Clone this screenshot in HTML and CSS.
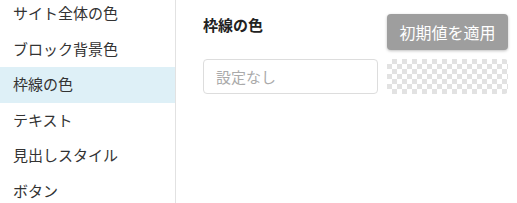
FILE: index.html
```html
<!DOCTYPE html>
<html lang="ja">
<head>
    <meta charset="UTF-8">
    <title>枠線の色</title>
    <link rel="stylesheet" href="styles.css">
</head>
<body>
    <div class="layout">
        <ul class="side-menu">
            <li>サイト全体の色</li>
            <li>ブロック背景色</li>
            <li class="active">枠線の色</li>
            <li>テキスト</li>
            <li>見出しスタイル</li>
            <li>ボタン</li>
        </ul>
        <div class="panel">
            <div class="panel-head">
                <h2>枠線の色</h2>
                <button class="reset-button">初期値を適用</button>
            </div>
            <div class="color-row">
                <input type="text" placeholder="設定なし">
                <div class="color-preview"></div>
            </div>
        </div>
    </div>
</body>
</html>
```

FILE: styles.css
```css
body {
    margin: 0;
    font-family: "Noto Sans CJK JP", "Noto Sans", sans-serif;
    background-color: #fff;
    color: #333;
    overflow: hidden;
}
.layout {
    display: flex;
    height: 203px;
}
.side-menu {
    list-style: none;
    margin: -4px 0 0 0;
    padding: 0;
    width: 175px;
    border-right: 1px solid #e2e2e2;
    flex-shrink: 0;
}
.side-menu li {
    height: 35.5px;
    line-height: 34px;
    padding-left: 13px;
    font-size: 15px;
    color: #333;
}
.side-menu li.active {
    background-color: #def0f7;
}
.panel {
    padding: 14px 0 0 27px;
    width: 305px;
}
.panel-head {
    display: flex;
    justify-content: space-between;
    align-items: flex-start;
}
.panel-head h2 {
    margin: 1px 0 0 0;
    font-size: 15px;
    font-weight: bold;
    color: #222;
    line-height: 20px;
}
.reset-button {
    width: 121px;
    height: 36px;
    padding: 0;
    background-color: #9e9e9e;
    color: #fff;
    border: none;
    border-radius: 4px;
    font-family: inherit;
    font-size: 16px;
    box-shadow: 0 1px 3px rgba(0, 0, 0, 0.25);
}
.color-row {
    display: flex;
    justify-content: space-between;
    margin-top: 9px;
}
.color-row input {
    box-sizing: border-box;
    width: 175px;
    height: 35px;
    padding: 0 12px;
    border: 1px solid #ddd;
    border-radius: 4px;
    font-family: inherit;
    font-size: 15px;
    color: #333;
}
.color-row input::placeholder {
    color: #aaa;
}
.color-preview {
    width: 121px;
    height: 35px;
    border-radius: 4px;
    background-color: #fff;
    background-image:
        linear-gradient(45deg, #e2e2e2 25%, transparent 25%, transparent 75%, #e2e2e2 75%),
        linear-gradient(45deg, #e2e2e2 25%, transparent 25%, transparent 75%, #e2e2e2 75%);
    background-size: 10px 10px;
    background-position: 0 0, 5px 5px;
}
```
